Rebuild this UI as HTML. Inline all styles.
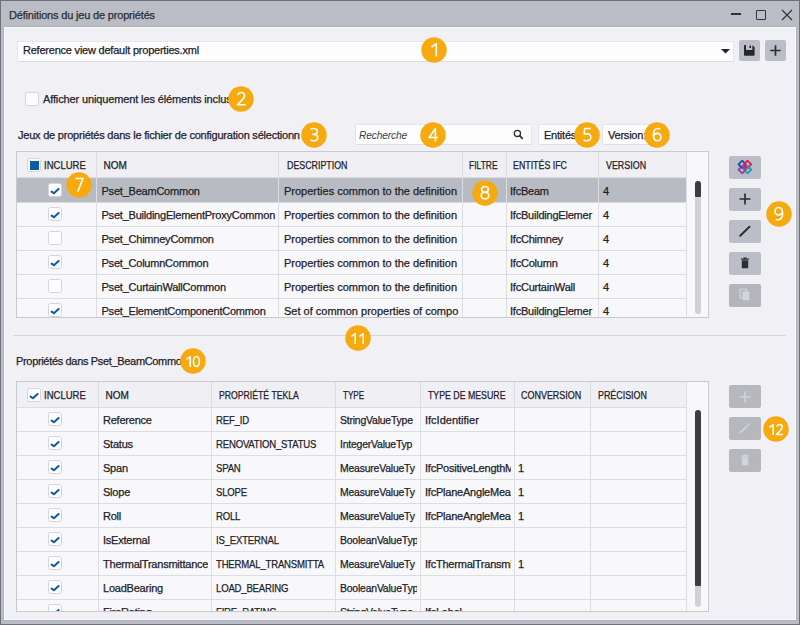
<!DOCTYPE html>
<html><head><meta charset="utf-8">
<style>
html,body{margin:0;padding:0;}
body{width:800px;height:625px;position:relative;overflow:hidden;background:#6b707b;font-family:"Liberation Sans", sans-serif;}
.bd{position:absolute;border-radius:50%;background:#f6aa0f;color:#fff;text-align:center;font-size:20px;-webkit-text-stroke:0.3px #fff;font-family:"Liberation Sans", sans-serif;z-index:20;}
.cb{position:absolute;background:#fdfdfe;border:1px solid #d3d5da;border-radius:2.5px;z-index:5;}
.btn{position:absolute;background:#bbbec6;border-radius:2px;}
.hd{font-size:9.2px;}
</style></head><body>

<div style="position:absolute;left:1px;top:1px;width:798px;height:623px;background:#babdc5;"></div>
<div style="position:absolute;left:3px;top:26px;width:794px;height:595px;background:#b1b4bd;"></div>
<div style="position:absolute;left:4px;top:27px;width:792px;height:593px;background:#f9f9fb;"></div>
<div style="position:absolute;left:5px;top:28px;width:790px;height:591px;background:#f1f1f5;"></div>
<div style="position:absolute;left:9px;top:8px;height:14px;line-height:14px;font-size:11px;color:#2a2d33;white-space:nowrap;-webkit-text-stroke:0.25px #2a2d33;letter-spacing:-0.18px;">Définitions du jeu de propriétés</div>
<div style="position:absolute;left:731px;top:13px;width:10px;height:1.5px;background:#30333a;"></div>
<div style="position:absolute;left:756px;top:10px;width:8px;height:8px;border:1.3px solid #30333a;border-radius:1px;"></div>
<svg style="position:absolute;left:781px;top:9px" width="12" height="12" viewBox="0 0 12 12"><path d="M1 1 L11 11 M11 1 L1 11" stroke="#30333a" stroke-width="1.2"/></svg>
<div style="position:absolute;left:17px;top:40.5px;width:717px;height:21px;background:#fdfdfe;border:1px solid #e6e7eb;border-bottom-color:#dcdde2;box-sizing:border-box;"></div>
<div style="position:absolute;left:23px;top:43px;height:14px;line-height:14px;font-size:11px;color:#1e2128;white-space:nowrap;-webkit-text-stroke:0.25px #1e2128;letter-spacing:-0.22px;">Reference view default properties.xml</div>
<svg style="position:absolute;left:721px;top:49px" width="9" height="5" viewBox="0 0 9 5"><path d="M0 0 L9 0 L4.5 4.5 Z" fill="#1f2228"/></svg>
<div class="btn" style="left:739px;top:40px;width:21px;height:21px;"><svg style="position:absolute;left:5px;top:5px" width="11" height="11" viewBox="0 0 11 11"><path d="M0.8 0 H8.3 L10.6 2.3 V9.9 Q10.6 10.7 9.8 10.7 H0.8 Q0 10.7 0 9.9 V0.8 Q0 0 0.8 0 Z M2 0 V4.9 H8.4 V0 Z" fill="#24272d" fill-rule="evenodd"/><rect x="5.4" y="0.4" width="1.6" height="2.5" rx="0.5" fill="#24272d"/></svg></div>
<div class="btn" style="left:765px;top:40px;width:21px;height:21px;"><svg style="position:absolute;left:5px;top:5px" width="11" height="11" viewBox="0 0 11 11"><path d="M5.5 0.3 V10.7 M0.3 5.5 H10.7" stroke="#2b2e35" stroke-width="1.7"/></svg></div>
<div class="cb" style="left:25px;top:92px;width:12px;height:12px;"></div>
<div style="position:absolute;left:43px;top:92px;height:14px;line-height:14px;font-size:11px;color:#1e2128;white-space:nowrap;-webkit-text-stroke:0.25px #1e2128;letter-spacing:-0.13px;">Afficher uniquement les éléments inclus</div>
<div style="position:absolute;left:18px;top:128px;height:14px;line-height:14px;font-size:11px;color:#1e2128;white-space:nowrap;-webkit-text-stroke:0.25px #1e2128;letter-spacing:-0.22px;">Jeux de propriétés dans le fichier de configuration sélectionn</div>
<div style="position:absolute;left:355px;top:124px;width:177px;height:21px;background:#fdfdfe;border-radius:2px;border:1px solid #e4e5e9;border-bottom-color:#dcdde2;box-sizing:border-box;"></div>
<div style="position:absolute;left:359px;top:128.5px;height:14px;line-height:14px;font-size:10.2px;color:#3a3e48;white-space:nowrap;-webkit-text-stroke:0.25px #3a3e48;font-style:italic;letter-spacing:-0.15px;-webkit-text-stroke:0;">Recherche</div>
<svg style="position:absolute;left:513px;top:129px" width="11" height="11" viewBox="0 0 11 11"><circle cx="4.4" cy="4.4" r="3.1" fill="none" stroke="#30333a" stroke-width="1.3"/><path d="M6.6 6.6 L9.3 9.3" stroke="#30333a" stroke-width="1.8" stroke-linecap="round"/></svg>
<div style="position:absolute;left:538px;top:124px;width:58px;height:21px;background:#fdfdfe;border-radius:2px;border-radius:2px;border:1px solid #e4e5e9;border-bottom-color:#dcdde2;box-sizing:border-box;"></div>
<div style="position:absolute;left:544px;top:128px;height:14px;line-height:14px;font-size:11px;color:#1e2128;white-space:nowrap;-webkit-text-stroke:0.25px #1e2128;letter-spacing:-0.22px;">Entités</div>
<div style="position:absolute;left:602px;top:124px;width:50px;height:21px;background:#fdfdfe;border-radius:2px;border-radius:2px;border:1px solid #e4e5e9;border-bottom-color:#dcdde2;box-sizing:border-box;"></div>
<div style="position:absolute;left:608px;top:128px;height:14px;line-height:14px;font-size:11px;color:#1e2128;white-space:nowrap;-webkit-text-stroke:0.25px #1e2128;letter-spacing:-0.22px;">Version:</div>
<div style="position:absolute;left:16px;top:151px;width:693px;height:167px;background:#f8f8fa;border:1px solid #c8cad0;border-top-width:1.5px;box-sizing:border-box;overflow:hidden;"></div>
<div style="position:absolute;left:17px;top:152px;width:669px;height:25px;background:#f0f0f4;"></div>
<div style="position:absolute;left:17px;top:177px;width:669px;height:1px;background:#dcdde2;"></div>
<div style="position:absolute;left:17px;top:202px;width:669px;height:1px;background:#dcdde2;"></div>
<div style="position:absolute;left:17px;top:226px;width:669px;height:1px;background:#dcdde2;"></div>
<div style="position:absolute;left:17px;top:250px;width:669px;height:1px;background:#dcdde2;"></div>
<div style="position:absolute;left:17px;top:274px;width:669px;height:1px;background:#dcdde2;"></div>
<div style="position:absolute;left:17px;top:298px;width:669px;height:1px;background:#dcdde2;"></div>
<div style="position:absolute;left:17px;top:178px;width:669px;height:24px;background:#b9bbc2;"></div>
<div style="position:absolute;left:96px;top:152px;width:1px;height:165px;background:#dcdde2;"></div>
<div style="position:absolute;left:278px;top:152px;width:1px;height:165px;background:#dcdde2;"></div>
<div style="position:absolute;left:462px;top:152px;width:1px;height:165px;background:#dcdde2;"></div>
<div style="position:absolute;left:506px;top:152px;width:1px;height:165px;background:#dcdde2;"></div>
<div style="position:absolute;left:598px;top:152px;width:1px;height:165px;background:#dcdde2;"></div>
<div style="position:absolute;left:686px;top:152px;width:1px;height:165px;background:#dcdde2;"></div>
<div class="cb" style="left:27px;top:158px;width:12px;height:12px;"><div style="position:absolute;left:1.5px;top:1.5px;width:9px;height:9px;background:#0f5ba3"></div></div>
<div style="position:absolute;left:44.0px;top:159.3px;height:14px;line-height:14px;font-size:10px;color:#1e2128;white-space:nowrap;-webkit-text-stroke:0.25px #1e2128;letter-spacing:0;transform:scaleX(0.953);transform-origin:0 0;">INCLURE</div>
<div style="position:absolute;left:103.5px;top:159.3px;height:14px;line-height:14px;font-size:10px;color:#1e2128;white-space:nowrap;-webkit-text-stroke:0.25px #1e2128;letter-spacing:0;transform:scaleX(1.0);transform-origin:0 0;">NOM</div>
<div style="position:absolute;left:286.5px;top:159.3px;height:14px;line-height:14px;font-size:10px;color:#1e2128;white-space:nowrap;-webkit-text-stroke:0.25px #1e2128;letter-spacing:0;transform:scaleX(0.884);transform-origin:0 0;">DESCRIPTION</div>
<div style="position:absolute;left:468.5px;top:159.3px;height:14px;line-height:14px;font-size:10px;color:#1e2128;white-space:nowrap;-webkit-text-stroke:0.25px #1e2128;letter-spacing:0;transform:scaleX(0.85);transform-origin:0 0;">FILTRE</div>
<div style="position:absolute;left:512.5px;top:159.3px;height:14px;line-height:14px;font-size:10px;color:#1e2128;white-space:nowrap;-webkit-text-stroke:0.25px #1e2128;letter-spacing:0;transform:scaleX(0.883);transform-origin:0 0;">ENTITÉS IFC</div>
<div style="position:absolute;left:605.5px;top:159.3px;height:14px;line-height:14px;font-size:10px;color:#1e2128;white-space:nowrap;-webkit-text-stroke:0.25px #1e2128;letter-spacing:0;transform:scaleX(0.89);transform-origin:0 0;">VERSION</div>
<div class="cb" style="left:48px;top:183px;width:12px;height:12px;"><svg width="14" height="14" viewBox="0 0 14 14" style="position:absolute;left:-1px;top:-1px"><path d="M3.6 8.6 L5.9 10.3 L10.6 5.9" fill="none" stroke="#0e5aa5" stroke-width="2" stroke-linecap="round" stroke-linejoin="round"/></svg></div>
<div style="position:absolute;left:101.5px;top:184.3px;height:14px;line-height:14px;font-size:11px;color:#1e2128;white-space:nowrap;-webkit-text-stroke:0.25px #1e2128;letter-spacing:-0.22px;">Pset_BeamCommon</div>
<div style="position:absolute;left:284px;top:184.3px;height:14px;line-height:14px;font-size:11px;color:#1e2128;white-space:nowrap;-webkit-text-stroke:0.25px #1e2128;letter-spacing:0;">Properties common to the definition</div>
<div style="position:absolute;left:510px;top:184.3px;height:14px;line-height:14px;font-size:11px;color:#1e2128;white-space:nowrap;-webkit-text-stroke:0.25px #1e2128;letter-spacing:-0.22px;">IfcBeam</div>
<div style="position:absolute;left:603px;top:184.3px;height:14px;line-height:14px;font-size:11px;color:#1e2128;white-space:nowrap;-webkit-text-stroke:0.25px #1e2128;letter-spacing:-0.22px;">4</div>
<div class="cb" style="left:48px;top:207px;width:12px;height:12px;"><svg width="14" height="14" viewBox="0 0 14 14" style="position:absolute;left:-1px;top:-1px"><path d="M3.6 8.6 L5.9 10.3 L10.6 5.9" fill="none" stroke="#0e5aa5" stroke-width="2" stroke-linecap="round" stroke-linejoin="round"/></svg></div>
<div style="position:absolute;left:101.5px;top:208.3px;height:14px;line-height:14px;font-size:11px;color:#1e2128;white-space:nowrap;-webkit-text-stroke:0.25px #1e2128;letter-spacing:-0.22px;">Pset_BuildingElementProxyCommon</div>
<div style="position:absolute;left:284px;top:208.3px;height:14px;line-height:14px;font-size:11px;color:#1e2128;white-space:nowrap;-webkit-text-stroke:0.25px #1e2128;letter-spacing:0;">Properties common to the definition</div>
<div style="position:absolute;left:510px;top:208.3px;height:14px;line-height:14px;font-size:11px;color:#1e2128;white-space:nowrap;-webkit-text-stroke:0.25px #1e2128;letter-spacing:-0.22px;">IfcBuildingElemer</div>
<div style="position:absolute;left:603px;top:208.3px;height:14px;line-height:14px;font-size:11px;color:#1e2128;white-space:nowrap;-webkit-text-stroke:0.25px #1e2128;letter-spacing:-0.22px;">4</div>
<div class="cb" style="left:48px;top:231px;width:12px;height:12px;"></div>
<div style="position:absolute;left:101.5px;top:232.3px;height:14px;line-height:14px;font-size:11px;color:#1e2128;white-space:nowrap;-webkit-text-stroke:0.25px #1e2128;letter-spacing:-0.22px;">Pset_ChimneyCommon</div>
<div style="position:absolute;left:284px;top:232.3px;height:14px;line-height:14px;font-size:11px;color:#1e2128;white-space:nowrap;-webkit-text-stroke:0.25px #1e2128;letter-spacing:0;">Properties common to the definition</div>
<div style="position:absolute;left:510px;top:232.3px;height:14px;line-height:14px;font-size:11px;color:#1e2128;white-space:nowrap;-webkit-text-stroke:0.25px #1e2128;letter-spacing:-0.22px;">IfcChimney</div>
<div style="position:absolute;left:603px;top:232.3px;height:14px;line-height:14px;font-size:11px;color:#1e2128;white-space:nowrap;-webkit-text-stroke:0.25px #1e2128;letter-spacing:-0.22px;">4</div>
<div class="cb" style="left:48px;top:255px;width:12px;height:12px;"><svg width="14" height="14" viewBox="0 0 14 14" style="position:absolute;left:-1px;top:-1px"><path d="M3.6 8.6 L5.9 10.3 L10.6 5.9" fill="none" stroke="#0e5aa5" stroke-width="2" stroke-linecap="round" stroke-linejoin="round"/></svg></div>
<div style="position:absolute;left:101.5px;top:256.3px;height:14px;line-height:14px;font-size:11px;color:#1e2128;white-space:nowrap;-webkit-text-stroke:0.25px #1e2128;letter-spacing:-0.22px;">Pset_ColumnCommon</div>
<div style="position:absolute;left:284px;top:256.3px;height:14px;line-height:14px;font-size:11px;color:#1e2128;white-space:nowrap;-webkit-text-stroke:0.25px #1e2128;letter-spacing:0;">Properties common to the definition</div>
<div style="position:absolute;left:510px;top:256.3px;height:14px;line-height:14px;font-size:11px;color:#1e2128;white-space:nowrap;-webkit-text-stroke:0.25px #1e2128;letter-spacing:-0.22px;">IfcColumn</div>
<div style="position:absolute;left:603px;top:256.3px;height:14px;line-height:14px;font-size:11px;color:#1e2128;white-space:nowrap;-webkit-text-stroke:0.25px #1e2128;letter-spacing:-0.22px;">4</div>
<div class="cb" style="left:48px;top:279px;width:12px;height:12px;"></div>
<div style="position:absolute;left:101.5px;top:280.3px;height:14px;line-height:14px;font-size:11px;color:#1e2128;white-space:nowrap;-webkit-text-stroke:0.25px #1e2128;letter-spacing:-0.22px;">Pset_CurtainWallCommon</div>
<div style="position:absolute;left:284px;top:280.3px;height:14px;line-height:14px;font-size:11px;color:#1e2128;white-space:nowrap;-webkit-text-stroke:0.25px #1e2128;letter-spacing:0;">Properties common to the definition</div>
<div style="position:absolute;left:510px;top:280.3px;height:14px;line-height:14px;font-size:11px;color:#1e2128;white-space:nowrap;-webkit-text-stroke:0.25px #1e2128;letter-spacing:-0.22px;">IfcCurtainWall</div>
<div style="position:absolute;left:603px;top:280.3px;height:14px;line-height:14px;font-size:11px;color:#1e2128;white-space:nowrap;-webkit-text-stroke:0.25px #1e2128;letter-spacing:-0.22px;">4</div>
<div class="cb" style="left:48px;top:303px;width:12px;height:12px;"><svg width="14" height="14" viewBox="0 0 14 14" style="position:absolute;left:-1px;top:-1px"><path d="M3.6 8.6 L5.9 10.3 L10.6 5.9" fill="none" stroke="#0e5aa5" stroke-width="2" stroke-linecap="round" stroke-linejoin="round"/></svg></div>
<div style="position:absolute;left:101.5px;top:304.3px;height:14px;line-height:14px;font-size:11px;color:#1e2128;white-space:nowrap;-webkit-text-stroke:0.25px #1e2128;letter-spacing:-0.22px;">Pset_ElementComponentCommon</div>
<div style="position:absolute;left:284px;top:304.3px;height:14px;line-height:14px;font-size:11px;color:#1e2128;white-space:nowrap;-webkit-text-stroke:0.25px #1e2128;letter-spacing:0;">Set of common properties of compo</div>
<div style="position:absolute;left:510px;top:304.3px;height:14px;line-height:14px;font-size:11px;color:#1e2128;white-space:nowrap;-webkit-text-stroke:0.25px #1e2128;letter-spacing:-0.22px;">IfcBuildingElemer</div>
<div style="position:absolute;left:603px;top:304.3px;height:14px;line-height:14px;font-size:11px;color:#1e2128;white-space:nowrap;-webkit-text-stroke:0.25px #1e2128;letter-spacing:-0.22px;">4</div>
<div style="position:absolute;left:5px;top:318px;width:700px;height:16px;background:#f1f1f5;z-index:10;"></div>
<div style="position:absolute;left:16px;top:317px;width:693px;height:1px;background:#c8cad0;z-index:11;"></div>
<div style="position:absolute;left:695px;top:181px;width:5.5px;height:133px;background:#cfd1d6;border-radius:3px;z-index:6;"></div>
<div style="position:absolute;left:695px;top:181px;width:5.5px;height:16px;background:#3a3d44;border-radius:3px 3px 1px 1px;z-index:7;"></div>
<div class="btn" style="left:729px;top:156px;width:32px;height:23px;"></div>
<div class="btn" style="left:729px;top:188px;width:32px;height:23px;"></div>
<div class="btn" style="left:729px;top:220px;width:32px;height:23px;"></div>
<div class="btn" style="left:729px;top:252px;width:32px;height:23px;"></div>
<div class="btn" style="left:729px;top:284px;width:32px;height:23px;background:#b3b5bb;"></div>
<svg style="position:absolute;left:734px;top:156px;z-index:8" width="22" height="22" viewBox="0 0 22 22">
<g fill="none" stroke-width="1.9" stroke-linejoin="round">
<path d="M13.5 9.899999999999999 L17.2 13.6 L13.5 17.3 L9.8 13.6 Z" stroke="#1ba7b5"/>
<path d="M8.2 9.899999999999999 L11.899999999999999 13.6 L8.2 17.3 L4.499999999999999 13.6 Z" stroke="#a03aa6"/>
<path d="M8.2 4.7 L11.899999999999999 8.4 L8.2 12.100000000000001 L4.499999999999999 8.4 Z" stroke="#1c52b5"/>
<path d="M13.5 4.7 L17.2 8.4 L13.5 12.100000000000001 L9.8 8.4 Z" stroke="#ea1a4c"/>
<path d="M13.5 17.3 L17.2 13.6 L13.5 9.9" stroke="#1ba7b5"/>
<path d="M8.2 9.9 L11.9 13.6" stroke="#a03aa6"/>
</g></svg>
<svg style="position:absolute;left:739px;top:193px;z-index:8" width="12" height="12" viewBox="0 0 12 12"><path d="M6 0.5 V11.5 M0.5 6 H11.5" stroke="#2b2e35" stroke-width="1.7"/></svg>
<svg style="position:absolute;left:738px;top:225px;z-index:8" width="14" height="13" viewBox="0 0 14 13"><path d="M2.2 10.8 L11.5 1.8" stroke="#2b2e35" stroke-width="2" stroke-linecap="round"/></svg>
<svg style="position:absolute;left:740px;top:257px;z-index:8" width="10" height="13" viewBox="0 0 10 13"><path d="M1 1.5 H9 V2.8 H1 Z M3.5 0.5 H6.5 V1.5 H3.5 Z M1.8 3.2 H8.2 V10.6 Q8.2 11.2 7.6 11.2 H2.4 Q1.8 11.2 1.8 10.6 Z" fill="#2b2e35"/></svg>
<svg style="position:absolute;left:739px;top:288px;z-index:8" width="12" height="14" viewBox="0 0 12 14"><rect x="1.2" y="1.2" width="6.5" height="8.5" fill="none" stroke="#d3d5d9" stroke-width="1.2"/><rect x="3.5" y="3.3" width="6.8" height="9" fill="#d3d5d9"/></svg>
<div style="position:absolute;left:13px;top:335px;width:773px;height:1px;background:#d6d7db;"></div>
<div style="position:absolute;left:16px;top:354px;height:14px;line-height:14px;font-size:11px;color:#1e2128;white-space:nowrap;-webkit-text-stroke:0.25px #1e2128;letter-spacing:-0.33px;">Propriétés dans Pset_BeamCommo</div>
<div style="position:absolute;left:16px;top:381px;width:693px;height:231px;background:#f8f8fa;border:1px solid #c8cad0;border-top-width:1.5px;box-sizing:border-box;overflow:hidden;"></div>
<div style="position:absolute;left:17px;top:382px;width:669px;height:25px;background:#f0f0f4;"></div>
<div style="position:absolute;left:17px;top:407px;width:669px;height:1px;background:#dcdde2;"></div>
<div style="position:absolute;left:17px;top:431px;width:669px;height:1px;background:#dcdde2;"></div>
<div style="position:absolute;left:17px;top:455px;width:669px;height:1px;background:#dcdde2;"></div>
<div style="position:absolute;left:17px;top:479px;width:669px;height:1px;background:#dcdde2;"></div>
<div style="position:absolute;left:17px;top:503px;width:669px;height:1px;background:#dcdde2;"></div>
<div style="position:absolute;left:17px;top:527px;width:669px;height:1px;background:#dcdde2;"></div>
<div style="position:absolute;left:17px;top:551px;width:669px;height:1px;background:#dcdde2;"></div>
<div style="position:absolute;left:17px;top:575px;width:669px;height:1px;background:#dcdde2;"></div>
<div style="position:absolute;left:17px;top:599px;width:669px;height:1px;background:#dcdde2;"></div>
<div style="position:absolute;left:98px;top:382px;width:1px;height:229px;background:#dcdde2;"></div>
<div style="position:absolute;left:211px;top:382px;width:1px;height:229px;background:#dcdde2;"></div>
<div style="position:absolute;left:335px;top:382px;width:1px;height:229px;background:#dcdde2;"></div>
<div style="position:absolute;left:420px;top:382px;width:1px;height:229px;background:#dcdde2;"></div>
<div style="position:absolute;left:514px;top:382px;width:1px;height:229px;background:#dcdde2;"></div>
<div style="position:absolute;left:590px;top:382px;width:1px;height:229px;background:#dcdde2;"></div>
<div style="position:absolute;left:686px;top:382px;width:1px;height:229px;background:#dcdde2;"></div>
<div class="cb" style="left:26.5px;top:387.5px;width:12px;height:12px;"><svg width="14" height="14" viewBox="0 0 14 14" style="position:absolute;left:-1px;top:-1px"><path d="M3.6 8.6 L5.9 10.3 L10.6 5.9" fill="none" stroke="#0e5aa5" stroke-width="2" stroke-linecap="round" stroke-linejoin="round"/></svg></div>
<div style="position:absolute;left:44.0px;top:388.8px;height:14px;line-height:14px;font-size:10px;color:#1e2128;white-space:nowrap;-webkit-text-stroke:0.25px #1e2128;letter-spacing:0;transform:scaleX(0.953);transform-origin:0 0;">INCLURE</div>
<div style="position:absolute;left:105.5px;top:388.8px;height:14px;line-height:14px;font-size:10px;color:#1e2128;white-space:nowrap;-webkit-text-stroke:0.25px #1e2128;letter-spacing:0;transform:scaleX(1.0);transform-origin:0 0;">NOM</div>
<div style="position:absolute;left:218.5px;top:388.8px;height:14px;line-height:14px;font-size:10px;color:#1e2128;white-space:nowrap;-webkit-text-stroke:0.25px #1e2128;letter-spacing:0;transform:scaleX(0.868);transform-origin:0 0;">PROPRIÉTÉ TEKLA</div>
<div style="position:absolute;left:342.5px;top:388.8px;height:14px;line-height:14px;font-size:10px;color:#1e2128;white-space:nowrap;-webkit-text-stroke:0.25px #1e2128;letter-spacing:0;transform:scaleX(0.81);transform-origin:0 0;">TYPE</div>
<div style="position:absolute;left:427.5px;top:388.8px;height:14px;line-height:14px;font-size:10px;color:#1e2128;white-space:nowrap;-webkit-text-stroke:0.25px #1e2128;letter-spacing:0;transform:scaleX(0.877);transform-origin:0 0;">TYPE DE MESURE</div>
<div style="position:absolute;left:520.5px;top:388.8px;height:14px;line-height:14px;font-size:10px;color:#1e2128;white-space:nowrap;-webkit-text-stroke:0.25px #1e2128;letter-spacing:0;transform:scaleX(0.896);transform-origin:0 0;">CONVERSION</div>
<div style="position:absolute;left:597.5px;top:388.8px;height:14px;line-height:14px;font-size:10px;color:#1e2128;white-space:nowrap;-webkit-text-stroke:0.25px #1e2128;letter-spacing:0;transform:scaleX(0.889);transform-origin:0 0;">PRÉCISION</div>
<div class="cb" style="left:48px;top:412px;width:12px;height:12px;"><svg width="14" height="14" viewBox="0 0 14 14" style="position:absolute;left:-1px;top:-1px"><path d="M3.6 8.6 L5.9 10.3 L10.6 5.9" fill="none" stroke="#0e5aa5" stroke-width="2" stroke-linecap="round" stroke-linejoin="round"/></svg></div>
<div style="position:absolute;left:99px;top:413.3px;width:109px;height:14px;overflow:hidden;"><div style="position:absolute;left:4px;top:0;line-height:14px;font-size:11px;letter-spacing:-0.22px;color:#1e2128;white-space:nowrap;-webkit-text-stroke:0.25px #1e2128;">Reference</div></div>
<div style="position:absolute;left:212px;top:413.3px;width:120px;height:14px;overflow:hidden;"><div style="position:absolute;left:4px;top:0;line-height:14px;font-size:11px;letter-spacing:-0.22px;color:#1e2128;white-space:nowrap;-webkit-text-stroke:0.25px #1e2128;transform:scaleX(0.87);transform-origin:0 0;">REF_ID</div></div>
<div style="position:absolute;left:336px;top:413.3px;width:81px;height:14px;overflow:hidden;"><div style="position:absolute;left:4px;top:0;line-height:14px;font-size:11px;letter-spacing:-0.22px;color:#1e2128;white-space:nowrap;-webkit-text-stroke:0.25px #1e2128;transform:scaleX(0.95);transform-origin:0 0;">StringValueType</div></div>
<div style="position:absolute;left:421px;top:413.3px;width:90px;height:14px;overflow:hidden;"><div style="position:absolute;left:4px;top:0;line-height:14px;font-size:11px;letter-spacing:-0.22px;color:#1e2128;white-space:nowrap;-webkit-text-stroke:0.25px #1e2128;letter-spacing:0;">IfcIdentifier</div></div>
<div class="cb" style="left:48px;top:436px;width:12px;height:12px;"><svg width="14" height="14" viewBox="0 0 14 14" style="position:absolute;left:-1px;top:-1px"><path d="M3.6 8.6 L5.9 10.3 L10.6 5.9" fill="none" stroke="#0e5aa5" stroke-width="2" stroke-linecap="round" stroke-linejoin="round"/></svg></div>
<div style="position:absolute;left:99px;top:437.3px;width:109px;height:14px;overflow:hidden;"><div style="position:absolute;left:4px;top:0;line-height:14px;font-size:11px;letter-spacing:-0.22px;color:#1e2128;white-space:nowrap;-webkit-text-stroke:0.25px #1e2128;">Status</div></div>
<div style="position:absolute;left:212px;top:437.3px;width:120px;height:14px;overflow:hidden;"><div style="position:absolute;left:4px;top:0;line-height:14px;font-size:11px;letter-spacing:-0.22px;color:#1e2128;white-space:nowrap;-webkit-text-stroke:0.25px #1e2128;transform:scaleX(0.87);transform-origin:0 0;">RENOVATION_STATUS</div></div>
<div style="position:absolute;left:336px;top:437.3px;width:81px;height:14px;overflow:hidden;"><div style="position:absolute;left:4px;top:0;line-height:14px;font-size:11px;letter-spacing:-0.22px;color:#1e2128;white-space:nowrap;-webkit-text-stroke:0.25px #1e2128;transform:scaleX(0.95);transform-origin:0 0;">IntegerValueTyp</div></div>
<div class="cb" style="left:48px;top:460px;width:12px;height:12px;"><svg width="14" height="14" viewBox="0 0 14 14" style="position:absolute;left:-1px;top:-1px"><path d="M3.6 8.6 L5.9 10.3 L10.6 5.9" fill="none" stroke="#0e5aa5" stroke-width="2" stroke-linecap="round" stroke-linejoin="round"/></svg></div>
<div style="position:absolute;left:99px;top:461.3px;width:109px;height:14px;overflow:hidden;"><div style="position:absolute;left:4px;top:0;line-height:14px;font-size:11px;letter-spacing:-0.22px;color:#1e2128;white-space:nowrap;-webkit-text-stroke:0.25px #1e2128;">Span</div></div>
<div style="position:absolute;left:212px;top:461.3px;width:120px;height:14px;overflow:hidden;"><div style="position:absolute;left:4px;top:0;line-height:14px;font-size:11px;letter-spacing:-0.22px;color:#1e2128;white-space:nowrap;-webkit-text-stroke:0.25px #1e2128;transform:scaleX(0.87);transform-origin:0 0;">SPAN</div></div>
<div style="position:absolute;left:336px;top:461.3px;width:81px;height:14px;overflow:hidden;"><div style="position:absolute;left:4px;top:0;line-height:14px;font-size:11px;letter-spacing:-0.22px;color:#1e2128;white-space:nowrap;-webkit-text-stroke:0.25px #1e2128;transform:scaleX(0.95);transform-origin:0 0;">MeasureValueTy</div></div>
<div style="position:absolute;left:421px;top:461.3px;width:90px;height:14px;overflow:hidden;"><div style="position:absolute;left:4px;top:0;line-height:14px;font-size:11px;letter-spacing:-0.22px;color:#1e2128;white-space:nowrap;-webkit-text-stroke:0.25px #1e2128;">IfcPositiveLengthMeasure</div></div>
<div style="position:absolute;left:515px;top:461.3px;width:72px;height:14px;overflow:hidden;"><div style="position:absolute;left:3px;top:0;line-height:14px;font-size:11px;letter-spacing:-0.22px;color:#1e2128;white-space:nowrap;-webkit-text-stroke:0.25px #1e2128;">1</div></div>
<div class="cb" style="left:48px;top:484px;width:12px;height:12px;"><svg width="14" height="14" viewBox="0 0 14 14" style="position:absolute;left:-1px;top:-1px"><path d="M3.6 8.6 L5.9 10.3 L10.6 5.9" fill="none" stroke="#0e5aa5" stroke-width="2" stroke-linecap="round" stroke-linejoin="round"/></svg></div>
<div style="position:absolute;left:99px;top:485.3px;width:109px;height:14px;overflow:hidden;"><div style="position:absolute;left:4px;top:0;line-height:14px;font-size:11px;letter-spacing:-0.22px;color:#1e2128;white-space:nowrap;-webkit-text-stroke:0.25px #1e2128;">Slope</div></div>
<div style="position:absolute;left:212px;top:485.3px;width:120px;height:14px;overflow:hidden;"><div style="position:absolute;left:4px;top:0;line-height:14px;font-size:11px;letter-spacing:-0.22px;color:#1e2128;white-space:nowrap;-webkit-text-stroke:0.25px #1e2128;transform:scaleX(0.87);transform-origin:0 0;">SLOPE</div></div>
<div style="position:absolute;left:336px;top:485.3px;width:81px;height:14px;overflow:hidden;"><div style="position:absolute;left:4px;top:0;line-height:14px;font-size:11px;letter-spacing:-0.22px;color:#1e2128;white-space:nowrap;-webkit-text-stroke:0.25px #1e2128;transform:scaleX(0.95);transform-origin:0 0;">MeasureValueTy</div></div>
<div style="position:absolute;left:421px;top:485.3px;width:90px;height:14px;overflow:hidden;"><div style="position:absolute;left:4px;top:0;line-height:14px;font-size:11px;letter-spacing:-0.22px;color:#1e2128;white-space:nowrap;-webkit-text-stroke:0.25px #1e2128;">IfcPlaneAngleMeasure</div></div>
<div style="position:absolute;left:515px;top:485.3px;width:72px;height:14px;overflow:hidden;"><div style="position:absolute;left:3px;top:0;line-height:14px;font-size:11px;letter-spacing:-0.22px;color:#1e2128;white-space:nowrap;-webkit-text-stroke:0.25px #1e2128;">1</div></div>
<div class="cb" style="left:48px;top:508px;width:12px;height:12px;"><svg width="14" height="14" viewBox="0 0 14 14" style="position:absolute;left:-1px;top:-1px"><path d="M3.6 8.6 L5.9 10.3 L10.6 5.9" fill="none" stroke="#0e5aa5" stroke-width="2" stroke-linecap="round" stroke-linejoin="round"/></svg></div>
<div style="position:absolute;left:99px;top:509.3px;width:109px;height:14px;overflow:hidden;"><div style="position:absolute;left:4px;top:0;line-height:14px;font-size:11px;letter-spacing:-0.22px;color:#1e2128;white-space:nowrap;-webkit-text-stroke:0.25px #1e2128;">Roll</div></div>
<div style="position:absolute;left:212px;top:509.3px;width:120px;height:14px;overflow:hidden;"><div style="position:absolute;left:4px;top:0;line-height:14px;font-size:11px;letter-spacing:-0.22px;color:#1e2128;white-space:nowrap;-webkit-text-stroke:0.25px #1e2128;transform:scaleX(0.87);transform-origin:0 0;">ROLL</div></div>
<div style="position:absolute;left:336px;top:509.3px;width:81px;height:14px;overflow:hidden;"><div style="position:absolute;left:4px;top:0;line-height:14px;font-size:11px;letter-spacing:-0.22px;color:#1e2128;white-space:nowrap;-webkit-text-stroke:0.25px #1e2128;transform:scaleX(0.95);transform-origin:0 0;">MeasureValueTy</div></div>
<div style="position:absolute;left:421px;top:509.3px;width:90px;height:14px;overflow:hidden;"><div style="position:absolute;left:4px;top:0;line-height:14px;font-size:11px;letter-spacing:-0.22px;color:#1e2128;white-space:nowrap;-webkit-text-stroke:0.25px #1e2128;">IfcPlaneAngleMeasure</div></div>
<div style="position:absolute;left:515px;top:509.3px;width:72px;height:14px;overflow:hidden;"><div style="position:absolute;left:3px;top:0;line-height:14px;font-size:11px;letter-spacing:-0.22px;color:#1e2128;white-space:nowrap;-webkit-text-stroke:0.25px #1e2128;">1</div></div>
<div class="cb" style="left:48px;top:532px;width:12px;height:12px;"><svg width="14" height="14" viewBox="0 0 14 14" style="position:absolute;left:-1px;top:-1px"><path d="M3.6 8.6 L5.9 10.3 L10.6 5.9" fill="none" stroke="#0e5aa5" stroke-width="2" stroke-linecap="round" stroke-linejoin="round"/></svg></div>
<div style="position:absolute;left:99px;top:533.3px;width:109px;height:14px;overflow:hidden;"><div style="position:absolute;left:4px;top:0;line-height:14px;font-size:11px;letter-spacing:-0.22px;color:#1e2128;white-space:nowrap;-webkit-text-stroke:0.25px #1e2128;">IsExternal</div></div>
<div style="position:absolute;left:212px;top:533.3px;width:120px;height:14px;overflow:hidden;"><div style="position:absolute;left:4px;top:0;line-height:14px;font-size:11px;letter-spacing:-0.22px;color:#1e2128;white-space:nowrap;-webkit-text-stroke:0.25px #1e2128;transform:scaleX(0.87);transform-origin:0 0;">IS_EXTERNAL</div></div>
<div style="position:absolute;left:336px;top:533.3px;width:81px;height:14px;overflow:hidden;"><div style="position:absolute;left:4px;top:0;line-height:14px;font-size:11px;letter-spacing:-0.22px;color:#1e2128;white-space:nowrap;-webkit-text-stroke:0.25px #1e2128;transform:scaleX(0.95);transform-origin:0 0;">BooleanValueType</div></div>
<div class="cb" style="left:48px;top:556px;width:12px;height:12px;"><svg width="14" height="14" viewBox="0 0 14 14" style="position:absolute;left:-1px;top:-1px"><path d="M3.6 8.6 L5.9 10.3 L10.6 5.9" fill="none" stroke="#0e5aa5" stroke-width="2" stroke-linecap="round" stroke-linejoin="round"/></svg></div>
<div style="position:absolute;left:99px;top:557.3px;width:109px;height:14px;overflow:hidden;"><div style="position:absolute;left:4px;top:0;line-height:14px;font-size:11px;letter-spacing:-0.22px;color:#1e2128;white-space:nowrap;-webkit-text-stroke:0.25px #1e2128;">ThermalTransmittance</div></div>
<div style="position:absolute;left:212px;top:557.3px;width:120px;height:14px;overflow:hidden;"><div style="position:absolute;left:4px;top:0;line-height:14px;font-size:11px;letter-spacing:-0.22px;color:#1e2128;white-space:nowrap;-webkit-text-stroke:0.25px #1e2128;transform:scaleX(0.87);transform-origin:0 0;">THERMAL_TRANSMITTA</div></div>
<div style="position:absolute;left:336px;top:557.3px;width:81px;height:14px;overflow:hidden;"><div style="position:absolute;left:4px;top:0;line-height:14px;font-size:11px;letter-spacing:-0.22px;color:#1e2128;white-space:nowrap;-webkit-text-stroke:0.25px #1e2128;transform:scaleX(0.95);transform-origin:0 0;">MeasureValueTy</div></div>
<div style="position:absolute;left:421px;top:557.3px;width:90px;height:14px;overflow:hidden;"><div style="position:absolute;left:4px;top:0;line-height:14px;font-size:11px;letter-spacing:-0.22px;color:#1e2128;white-space:nowrap;-webkit-text-stroke:0.25px #1e2128;">IfcThermalTransmittanceMeasure</div></div>
<div style="position:absolute;left:515px;top:557.3px;width:72px;height:14px;overflow:hidden;"><div style="position:absolute;left:3px;top:0;line-height:14px;font-size:11px;letter-spacing:-0.22px;color:#1e2128;white-space:nowrap;-webkit-text-stroke:0.25px #1e2128;">1</div></div>
<div class="cb" style="left:48px;top:580px;width:12px;height:12px;"><svg width="14" height="14" viewBox="0 0 14 14" style="position:absolute;left:-1px;top:-1px"><path d="M3.6 8.6 L5.9 10.3 L10.6 5.9" fill="none" stroke="#0e5aa5" stroke-width="2" stroke-linecap="round" stroke-linejoin="round"/></svg></div>
<div style="position:absolute;left:99px;top:581.3px;width:109px;height:14px;overflow:hidden;"><div style="position:absolute;left:4px;top:0;line-height:14px;font-size:11px;letter-spacing:-0.22px;color:#1e2128;white-space:nowrap;-webkit-text-stroke:0.25px #1e2128;">LoadBearing</div></div>
<div style="position:absolute;left:212px;top:581.3px;width:120px;height:14px;overflow:hidden;"><div style="position:absolute;left:4px;top:0;line-height:14px;font-size:11px;letter-spacing:-0.22px;color:#1e2128;white-space:nowrap;-webkit-text-stroke:0.25px #1e2128;transform:scaleX(0.87);transform-origin:0 0;">LOAD_BEARING</div></div>
<div style="position:absolute;left:336px;top:581.3px;width:81px;height:14px;overflow:hidden;"><div style="position:absolute;left:4px;top:0;line-height:14px;font-size:11px;letter-spacing:-0.22px;color:#1e2128;white-space:nowrap;-webkit-text-stroke:0.25px #1e2128;transform:scaleX(0.95);transform-origin:0 0;">BooleanValueType</div></div>
<div class="cb" style="left:48px;top:604px;width:12px;height:12px;"><svg width="14" height="14" viewBox="0 0 14 14" style="position:absolute;left:-1px;top:-1px"><path d="M3.6 8.6 L5.9 10.3 L10.6 5.9" fill="none" stroke="#0e5aa5" stroke-width="2" stroke-linecap="round" stroke-linejoin="round"/></svg></div>
<div style="position:absolute;left:99px;top:605.3px;width:109px;height:14px;overflow:hidden;"><div style="position:absolute;left:4px;top:0;line-height:14px;font-size:11px;letter-spacing:-0.22px;color:#1e2128;white-space:nowrap;-webkit-text-stroke:0.25px #1e2128;">FireRating</div></div>
<div style="position:absolute;left:212px;top:605.3px;width:120px;height:14px;overflow:hidden;"><div style="position:absolute;left:4px;top:0;line-height:14px;font-size:11px;letter-spacing:-0.22px;color:#1e2128;white-space:nowrap;-webkit-text-stroke:0.25px #1e2128;transform:scaleX(0.87);transform-origin:0 0;">FIRE_RATING</div></div>
<div style="position:absolute;left:336px;top:605.3px;width:81px;height:14px;overflow:hidden;"><div style="position:absolute;left:4px;top:0;line-height:14px;font-size:11px;letter-spacing:-0.22px;color:#1e2128;white-space:nowrap;-webkit-text-stroke:0.25px #1e2128;transform:scaleX(0.95);transform-origin:0 0;">StringValueType</div></div>
<div style="position:absolute;left:421px;top:605.3px;width:90px;height:14px;overflow:hidden;"><div style="position:absolute;left:4px;top:0;line-height:14px;font-size:11px;letter-spacing:-0.22px;color:#1e2128;white-space:nowrap;-webkit-text-stroke:0.25px #1e2128;">IfcLabel</div></div>
<div style="position:absolute;left:5px;top:612px;width:700px;height:7px;background:#f1f1f5;z-index:10;"></div>
<div style="position:absolute;left:16px;top:611px;width:693px;height:1px;background:#c8cad0;z-index:11;"></div>
<div style="position:absolute;left:695px;top:410px;width:5.5px;height:197px;background:#cfd1d6;border-radius:3px;z-index:6;"></div>
<div style="position:absolute;left:695px;top:410px;width:5.5px;height:176px;background:#3a3d44;border-radius:3px 3px 1px 1px;z-index:7;"></div>
<div class="btn" style="left:729px;top:385px;width:32px;height:23px;background:#b6b8be;"></div>
<div class="btn" style="left:729px;top:417px;width:32px;height:23px;background:#b6b8be;"></div>
<div class="btn" style="left:729px;top:449px;width:32px;height:23px;background:#b6b8be;"></div>
<svg style="position:absolute;left:739px;top:391px;z-index:8" width="12" height="12" viewBox="0 0 12 12"><path d="M6 0.5 V11.5 M0.5 6 H11.5" stroke="#d3d5d9" stroke-width="1.5"/></svg>
<svg style="position:absolute;left:738px;top:422px;z-index:8" width="14" height="13" viewBox="0 0 14 13"><path d="M2.5 10.5 L11.2 2" stroke="#d3d5d9" stroke-width="1.6" stroke-linecap="round"/></svg>
<svg style="position:absolute;left:740px;top:454px;z-index:8" width="10" height="13" viewBox="0 0 10 13"><path d="M1 1.5 H9 V2.8 H1 Z M3.5 0.5 H6.5 V1.5 H3.5 Z M1.8 3.2 H8.2 V10.6 Q8.2 11.2 7.6 11.2 H2.4 Q1.8 11.2 1.8 10.6 Z" fill="#d3d5d9"/></svg>
<svg style="position:absolute;left:418.50px;top:35.40px;z-index:20" width="30" height="30" viewBox="0 0 30 30"><circle cx="15.0" cy="15.0" r="12.75" fill="#f6aa0f"/><g fill="none" stroke="#fff" stroke-width="1.60" stroke-linecap="butt" stroke-linejoin="round"><path transform="translate(10.40,7.75)" d="M2.2 4.3 L6.9 0.9 V13.8"/></g></svg>
<svg style="position:absolute;left:225.50px;top:84.30px;z-index:20" width="30" height="30" viewBox="0 0 30 30"><circle cx="15.0" cy="15.0" r="12.75" fill="#f6aa0f"/><g fill="none" stroke="#fff" stroke-width="1.60" stroke-linecap="butt" stroke-linejoin="round"><path transform="translate(10.40,7.75)" d="M1.3 3.3 C1.9 1.6 3.2 0.75 4.8 0.75 C6.8 0.75 8.2 2 8.2 3.8 C8.2 5.4 7.4 6.6 5.4 8.6 L1 13.05 H9.2"/></g></svg>
<svg style="position:absolute;left:298.50px;top:120.30px;z-index:20" width="30" height="30" viewBox="0 0 30 30"><circle cx="15.0" cy="15.0" r="12.75" fill="#f6aa0f"/><g fill="none" stroke="#fff" stroke-width="1.60" stroke-linecap="butt" stroke-linejoin="round"><path transform="translate(10.40,7.75)" d="M1.2 1.6 C2 1 3.1 0.75 4.3 0.75 C6.5 0.75 7.9 1.9 7.9 3.6 C7.9 5.4 6.5 6.6 4.2 6.6 H3 M4.2 6.6 C6.8 6.6 8.3 7.9 8.3 9.7 C8.3 11.7 6.6 13.05 4.1 13.05 C2.8 13.05 1.7 12.7 0.9 12.1"/></g></svg>
<svg style="position:absolute;left:417.50px;top:120.40px;z-index:20" width="30" height="30" viewBox="0 0 30 30"><circle cx="15.0" cy="15.0" r="12.75" fill="#f6aa0f"/><g fill="none" stroke="#fff" stroke-width="1.60" stroke-linecap="butt" stroke-linejoin="round"><path transform="translate(10.40,7.75)" d="M7 13.8 V0.9 L0.75 9.8 H9.5"/></g></svg>
<svg style="position:absolute;left:571.50px;top:120.40px;z-index:20" width="30" height="30" viewBox="0 0 30 30"><circle cx="15.0" cy="15.0" r="12.75" fill="#f6aa0f"/><g fill="none" stroke="#fff" stroke-width="1.60" stroke-linecap="butt" stroke-linejoin="round"><path transform="translate(10.40,7.75)" d="M8.3 0.75 H2.3 L1.8 6.5 C2.5 6.2 3.3 6.05 4.2 6.05 C6.7 6.05 8.4 7.5 8.4 9.5 C8.4 11.7 6.6 13.05 4.2 13.05 C2.9 13.05 1.8 12.7 1 12.2"/></g></svg>
<svg style="position:absolute;left:641.50px;top:120.40px;z-index:20" width="30" height="30" viewBox="0 0 30 30"><circle cx="15.0" cy="15.0" r="12.75" fill="#f6aa0f"/><g fill="none" stroke="#fff" stroke-width="1.60" stroke-linecap="butt" stroke-linejoin="round"><path transform="translate(10.40,7.75)" d="M7.9 1.1 C7.2 0.85 6.4 0.75 5.5 0.75 C2.7 0.75 1 3.3 1 7.2 C1 11 2.5 13.05 4.9 13.05 C7 13.05 8.5 11.4 8.5 9.2 C8.5 7 7.1 5.6 5 5.6 C3 5.6 1.6 6.8 1.1 8.2"/></g></svg>
<svg style="position:absolute;left:63.50px;top:170.40px;z-index:20" width="30" height="30" viewBox="0 0 30 30"><circle cx="15.0" cy="15.0" r="12.75" fill="#f6aa0f"/><g fill="none" stroke="#fff" stroke-width="1.60" stroke-linecap="butt" stroke-linejoin="round"><path transform="translate(10.40,7.75)" d="M0.9 0.75 H8.6 L3.4 13.8"/></g></svg>
<svg style="position:absolute;left:469.60px;top:178.40px;z-index:20" width="30" height="30" viewBox="0 0 30 30"><circle cx="15.0" cy="15.0" r="12.75" fill="#f6aa0f"/><g fill="none" stroke="#fff" stroke-width="1.60" stroke-linecap="butt" stroke-linejoin="round"><path transform="translate(10.40,7.75)" d="M4.6 6.5 C2.6 6.5 1.2 5.3 1.2 3.6 C1.2 1.9 2.6 0.75 4.6 0.75 C6.6 0.75 8 1.9 8 3.6 C8 5.3 6.6 6.5 4.6 6.5 C2.2 6.5 0.8 7.8 0.8 9.7 C0.8 11.7 2.4 13.05 4.6 13.05 C6.8 13.05 8.4 11.7 8.4 9.7 C8.4 7.8 7 6.5 4.6 6.5 Z"/></g></svg>
<svg style="position:absolute;left:763.50px;top:199.40px;z-index:20" width="30" height="30" viewBox="0 0 30 30"><circle cx="15.0" cy="15.0" r="12.75" fill="#f6aa0f"/><g fill="none" stroke="#fff" stroke-width="1.60" stroke-linecap="butt" stroke-linejoin="round"><path transform="translate(10.40,7.75)" d="M1.3 12.7 C2 12.95 2.8 13.05 3.7 13.05 C6.5 13.05 8.2 10.5 8.2 6.6 C8.2 2.8 6.7 0.75 4.3 0.75 C2.2 0.75 0.7 2.4 0.7 4.6 C0.7 6.8 2.1 8.2 4.2 8.2 C6.2 8.2 7.6 7 8.1 5.6"/></g></svg>
<svg style="position:absolute;left:177.60px;top:346.40px;z-index:20" width="30" height="30" viewBox="0 0 30 30"><circle cx="15.0" cy="15.0" r="12.75" fill="#f6aa0f"/><g fill="none" stroke="#fff" stroke-width="1.94" stroke-linecap="butt" stroke-linejoin="round"><path transform="translate(6.70,9.98) scale(0.8)" d="M2.2 4.3 L6.9 0.9 V13.8"/><path transform="translate(14.70,9.98) scale(0.8)" d="M4.6 0.75 C2.3 0.75 0.9 3.1 0.9 6.9 C0.9 10.7 2.3 13.05 4.6 13.05 C6.9 13.05 8.3 10.7 8.3 6.9 C8.3 3.1 6.9 0.75 4.6 0.75 Z"/></g></svg>
<svg style="position:absolute;left:342.50px;top:322.50px;z-index:20" width="30" height="30" viewBox="0 0 30 30"><circle cx="15.0" cy="15.0" r="12.75" fill="#f6aa0f"/><g fill="none" stroke="#fff" stroke-width="1.94" stroke-linecap="butt" stroke-linejoin="round"><path transform="translate(6.70,9.98) scale(0.8)" d="M2.2 4.3 L6.9 0.9 V13.8"/><path transform="translate(14.70,9.98) scale(0.8)" d="M2.2 4.3 L6.9 0.9 V13.8"/></g></svg>
<svg style="position:absolute;left:760.50px;top:414.40px;z-index:20" width="30" height="30" viewBox="0 0 30 30"><circle cx="15.0" cy="15.0" r="12.75" fill="#f6aa0f"/><g fill="none" stroke="#fff" stroke-width="1.94" stroke-linecap="butt" stroke-linejoin="round"><path transform="translate(6.70,9.98) scale(0.8)" d="M2.2 4.3 L6.9 0.9 V13.8"/><path transform="translate(14.70,9.98) scale(0.8)" d="M1.3 3.3 C1.9 1.6 3.2 0.75 4.8 0.75 C6.8 0.75 8.2 2 8.2 3.8 C8.2 5.4 7.4 6.6 5.4 8.6 L1 13.05 H9.2"/></g></svg>
</body></html>
